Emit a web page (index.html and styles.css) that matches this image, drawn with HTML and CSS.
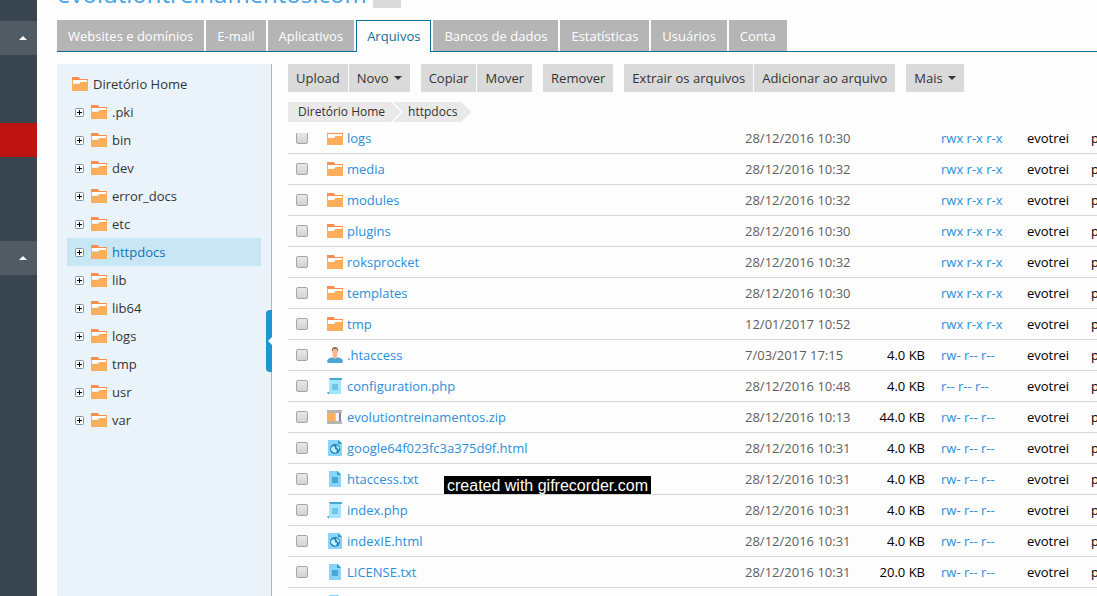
FILE: index.html
```
<!DOCTYPE html>
<html lang="pt-BR">
<head>
<meta charset="utf-8">
<title>Arquivos</title>
<link rel="stylesheet" href="styles.css">
</head>
<body>
<svg class="sprite" aria-hidden="true">
  <symbol id="folder" viewBox="0 0 16 14"><path fill="#ff8c4d" d="M0 0h7l1 2h8v3H0z"/><path fill="#fff" d="M1 3h14v3H1z"/><path fill="#fcae5b" d="M0 7h7l1.500-2H16v9H0z"/><path fill="#fcae5b" d="M0 3h1v5H0zM15 3h1v3h-1z"/></symbol>
  <symbol id="user" viewBox="0 0 16 16"><path fill="#4ba5d2" d="M0 15q0-4 5-4.500h6q5 .5 5 4.500l-1.500 1h-13z"/><path fill="#f5b893" d="M5.500 2h5v5L10 9v2l-2 1-2-1V9l-.5-2z"/><path fill="#8b684f" d="M5 3q0-3 3-3t3 3v1h-1V2H6v2H5z"/></symbol>
  <symbol id="php" viewBox="0 0 16 16"><path fill="#a5e4ff" d="M3 1h11v15H2V3z"/><path fill="#4ba5d2" d="M2 0h13v2H3zM0 14h2v2H1z"/><path fill="#71c4e6" d="M5 6h6v6H5z"/></symbol>
  <symbol id="zip" viewBox="0 0 16 14"><path fill="#f4f4fa" d="M1 2h13v10H1z"/><path fill="#fcae5b" d="M0 3h8v8H0z"/><path fill="#e4c9a6" d="M8 3h1v8H8z"/><path fill="#8581b0" d="M12 2h2v10h-2z"/><path fill="#b5b5b5" d="M0 0h15v3H0zM0 11h15v3H0z"/></symbol>
  <symbol id="html" viewBox="0 0 16 16"><path fill="#89d5fa" d="M1 0h11l3 3v13H1z"/><path fill="#3499c7" d="M11 0l4 4h-4z"/><circle cx="8" cy="9" r="5" fill="#1e84b5"/><path fill="#c5efff" d="M4 8l2-2 2 1v2l2 1-1 3-3-1-2-2zM9 5l3 2v3l-2-2z"/></symbol>
  <symbol id="txt" viewBox="0 0 16 16"><path fill="#89d5fa" d="M2 0h9l3 3v13H2z"/><path fill="#3499c7" d="M10 0l4 4h-4z"/><path fill="#4ba5d2" d="M5 6h6v6H5z"/></symbol>
  <symbol id="plus" viewBox="0 0 9 9"><rect x=".5" y=".5" width="8" height="8" rx="1" fill="#fff" stroke="#7d91b8"/><path fill="#000" d="M4 2h1v5H4zM2 4h5v1H2z"/></symbol>
</svg>
<div class="page">
  <aside class="rail">
    <button class="rail-item" aria-label="Recolher"><i class="up"></i></button>
    <div class="rail-item current"></div>
    <button class="rail-item" aria-label="Recolher"><i class="up"></i></button>
  </aside>
  <main class="content">
    <header class="title"><h1>evolutiontreinamentos.com</h1><button class="title-menu" aria-label="Domínios"></button></header>
    <nav class="tabs">
      <a href="#">Websites e domínios</a><a href="#">E-mail</a><a href="#">Aplicativos</a><a href="#" class="active">Arquivos</a><a href="#">Bancos de dados</a><a href="#">Estatísticas</a><a href="#">Usuários</a><a href="#">Conta</a>
    </nav>
    <div class="columns">
      <div class="tree">
        <a href="#" class="root"><svg class="folder"><use href="#folder"/></svg>Diretório Home</a>
        <ul>
          <li><svg class="plus"><use href="#plus"/></svg><svg class="folder"><use href="#folder"/></svg><a href="#">.pki</a></li>
          <li><svg class="plus"><use href="#plus"/></svg><svg class="folder"><use href="#folder"/></svg><a href="#">bin</a></li>
          <li><svg class="plus"><use href="#plus"/></svg><svg class="folder"><use href="#folder"/></svg><a href="#">dev</a></li>
          <li><svg class="plus"><use href="#plus"/></svg><svg class="folder"><use href="#folder"/></svg><a href="#">error_docs</a></li>
          <li><svg class="plus"><use href="#plus"/></svg><svg class="folder"><use href="#folder"/></svg><a href="#">etc</a></li>
          <li class="selected"><svg class="plus"><use href="#plus"/></svg><svg class="folder"><use href="#folder"/></svg><a href="#">httpdocs</a></li>
          <li><svg class="plus"><use href="#plus"/></svg><svg class="folder"><use href="#folder"/></svg><a href="#">lib</a></li>
          <li><svg class="plus"><use href="#plus"/></svg><svg class="folder"><use href="#folder"/></svg><a href="#">lib64</a></li>
          <li><svg class="plus"><use href="#plus"/></svg><svg class="folder"><use href="#folder"/></svg><a href="#">logs</a></li>
          <li><svg class="plus"><use href="#plus"/></svg><svg class="folder"><use href="#folder"/></svg><a href="#">tmp</a></li>
          <li><svg class="plus"><use href="#plus"/></svg><svg class="folder"><use href="#folder"/></svg><a href="#">usr</a></li>
          <li><svg class="plus"><use href="#plus"/></svg><svg class="folder"><use href="#folder"/></svg><a href="#">var</a></li>
        </ul>
        <button class="handle" aria-label="Ocultar árvore"><i></i></button>
      </div>
      <section class="files">
        <div class="toolbar">
          <div class="group"><button>Upload</button><button>Novo<i class="down"></i></button></div>
          <div class="group"><button>Copiar</button><button>Mover</button></div>
          <div class="group"><button>Remover</button></div>
          <div class="group"><button>Extrair os arquivos</button><button>Adicionar ao arquivo</button></div>
          <div class="group"><button>Mais<i class="down"></i></button></div>
        </div>
        <nav class="crumbs"><a href="#">Diretório Home</a><a href="#">httpdocs</a></nav>
        <div class="scroll">
          <table>
            <colgroup><col class="c-check"><col><col class="c-date"><col class="c-size"><col class="c-perm"><col class="c-user"><col class="c-group"></colgroup>
            <tbody>
            <tr><td><input type="checkbox" aria-label="logs"></td><td><a href="#" class="name"><svg class="folder"><use href="#folder"/></svg>logs</a></td><td>28/12/2016 10:30</td><td></td><td><a href="#">rwx r-x r-x</a></td><td>evotrei</td><td>psacln</td></tr>
            <tr><td><input type="checkbox" aria-label="media"></td><td><a href="#" class="name"><svg class="folder"><use href="#folder"/></svg>media</a></td><td>28/12/2016 10:32</td><td></td><td><a href="#">rwx r-x r-x</a></td><td>evotrei</td><td>psacln</td></tr>
            <tr><td><input type="checkbox" aria-label="modules"></td><td><a href="#" class="name"><svg class="folder"><use href="#folder"/></svg>modules</a></td><td>28/12/2016 10:32</td><td></td><td><a href="#">rwx r-x r-x</a></td><td>evotrei</td><td>psacln</td></tr>
            <tr><td><input type="checkbox" aria-label="plugins"></td><td><a href="#" class="name"><svg class="folder"><use href="#folder"/></svg>plugins</a></td><td>28/12/2016 10:30</td><td></td><td><a href="#">rwx r-x r-x</a></td><td>evotrei</td><td>psacln</td></tr>
            <tr><td><input type="checkbox" aria-label="roksprocket"></td><td><a href="#" class="name"><svg class="folder"><use href="#folder"/></svg>roksprocket</a></td><td>28/12/2016 10:32</td><td></td><td><a href="#">rwx r-x r-x</a></td><td>evotrei</td><td>psacln</td></tr>
            <tr><td><input type="checkbox" aria-label="templates"></td><td><a href="#" class="name"><svg class="folder"><use href="#folder"/></svg>templates</a></td><td>28/12/2016 10:30</td><td></td><td><a href="#">rwx r-x r-x</a></td><td>evotrei</td><td>psacln</td></tr>
            <tr><td><input type="checkbox" aria-label="tmp"></td><td><a href="#" class="name"><svg class="folder"><use href="#folder"/></svg>tmp</a></td><td>12/01/2017 10:52</td><td></td><td><a href="#">rwx r-x r-x</a></td><td>evotrei</td><td>psacln</td></tr>
            <tr><td><input type="checkbox" aria-label=".htaccess"></td><td><a href="#" class="name"><svg class="file"><use href="#user"/></svg>.htaccess</a></td><td>7/03/2017 17:15</td><td>4.0 KB</td><td><a href="#">rw- r-- r--</a></td><td>evotrei</td><td>psacln</td></tr>
            <tr><td><input type="checkbox" aria-label="configuration.php"></td><td><a href="#" class="name"><svg class="file"><use href="#php"/></svg>configuration.php</a></td><td>28/12/2016 10:48</td><td>4.0 KB</td><td><a href="#">r-- r-- r--</a></td><td>evotrei</td><td>psacln</td></tr>
            <tr><td><input type="checkbox" aria-label="evolutiontreinamentos.zip"></td><td><a href="#" class="name"><svg class="folder"><use href="#zip"/></svg>evolutiontreinamentos.zip</a></td><td>28/12/2016 10:13</td><td>44.0 KB</td><td><a href="#">rw- r-- r--</a></td><td>evotrei</td><td>psacln</td></tr>
            <tr><td><input type="checkbox" aria-label="google64f023fc3a375d9f.html"></td><td><a href="#" class="name"><svg class="file"><use href="#html"/></svg>google64f023fc3a375d9f.html</a></td><td>28/12/2016 10:31</td><td>4.0 KB</td><td><a href="#">rw- r-- r--</a></td><td>evotrei</td><td>psacln</td></tr>
            <tr><td><input type="checkbox" aria-label="htaccess.txt"></td><td><a href="#" class="name"><svg class="file"><use href="#txt"/></svg>htaccess.txt</a></td><td>28/12/2016 10:31</td><td>4.0 KB</td><td><a href="#">rw- r-- r--</a></td><td>evotrei</td><td>psacln</td></tr>
            <tr><td><input type="checkbox" aria-label="index.php"></td><td><a href="#" class="name"><svg class="file"><use href="#php"/></svg>index.php</a></td><td>28/12/2016 10:31</td><td>4.0 KB</td><td><a href="#">rw- r-- r--</a></td><td>evotrei</td><td>psacln</td></tr>
            <tr><td><input type="checkbox" aria-label="indexIE.html"></td><td><a href="#" class="name"><svg class="file"><use href="#html"/></svg>indexIE.html</a></td><td>28/12/2016 10:31</td><td>4.0 KB</td><td><a href="#">rw- r-- r--</a></td><td>evotrei</td><td>psacln</td></tr>
            <tr><td><input type="checkbox" aria-label="LICENSE.txt"></td><td><a href="#" class="name"><svg class="file"><use href="#txt"/></svg>LICENSE.txt</a></td><td>28/12/2016 10:31</td><td>20.0 KB</td><td><a href="#">rw- r-- r--</a></td><td>evotrei</td><td>psacln</td></tr>
            <tr><td></td><td><span class="name"><svg class="file"><use href="#txt"/></svg></span></td><td></td><td></td><td></td><td></td><td></td></tr>
            </tbody>
          </table>
        </div>
      </section>
    </div>
  </main>
  <div class="watermark">created with gifrecorder.com</div>
</div>
</body>
</html>
```
FILE: styles.css
```
* { box-sizing: border-box; }
body { margin: 0; background: #fdfdfd; font: 13px/18px "Open Sans", "Noto Sans", sans-serif; color: #333; }
a { color: inherit; text-decoration: none; }
button { border: 0; border-radius: 0; margin: 0; padding: 0; font: inherit; color: inherit; }
ul { list-style: none; margin: 0; padding: 0; }
svg { display: block; flex: none; }
.sprite { display: none; }
.page { position: relative; display: flex; height: 100vh; overflow: hidden; }

.rail { flex: none; width: 37px; background: #394550; padding-top: 21px; display: flex; flex-direction: column; }
.rail-item { height: 34px; background: #515b63; display: flex; align-items: center; justify-content: flex-end; padding-right: 10px; }
.rail-item.current { background: #bd1313; margin: 68px 0 84px; }
.up { border: 4px solid transparent; border-top: 0; border-bottom-color: #fff; }

.content { flex: 1; min-width: 0; padding-left: 20px; display: flex; flex-direction: column; }
.title { flex: none; height: 20px; display: flex; align-items: flex-end; gap: 6px; padding-bottom: 12px; }
.title h1 { margin: 0; font-size: 24px; line-height: 28px; font-weight: 400; color: #43a3e9; }
.title-menu { width: 28px; height: 28px; background: #dadada; }

.tabs { flex: none; display: flex; gap: 2px; height: 32px; border-bottom: 1px solid #0f6f94; }
.tabs a { background: #b5b5b5; color: #fff; padding: 7px 11px 0; white-space: nowrap; }
.tabs .active { background: #fdfdfd; color: #0f6f94; border: 1px solid #0f6f94; border-bottom: 0; padding: 6px 10px 0; margin-bottom: -1px; }

.columns { flex: 1; min-height: 0; display: flex; gap: 16px; padding-top: 12px; }
.tree { position: relative; flex: none; width: 215px; padding: 6px 10px; background: #eaf3fa; border-right: 1px solid #b2b4b8; }
.root, .tree li { display: flex; align-items: center; gap: 5px; height: 28px; }
.root { padding-left: 5px; }
.tree li { padding-left: 8px; }
.tree .selected { background: #c8e6f4; color: #0f75b5; }
.plus { width: 9px; height: 9px; margin-right: 2px; }
.folder { width: 16px; height: 14px; }
.file { width: 16px; height: 16px; }
.handle { position: absolute; right: -1px; top: 246px; width: 6px; height: 62px; background: #1f96cc; border-radius: 4px 0 0 4px; display: flex; align-items: center; justify-content: flex-end; }
.handle i { border: 4px solid transparent; border-left: 0; border-right-color: #fff; }

.files { flex: 1; min-width: 0; display: flex; flex-direction: column; }
.toolbar { flex: none; display: flex; gap: 11px; }
.group { display: flex; gap: 1px; }
.group button { height: 28px; padding: 0 8px; background: #dadada; white-space: nowrap; display: flex; align-items: center; gap: 5px; }
.down { border: 4px solid transparent; border-bottom: 0; border-top-color: #333; }
.crumbs { flex: none; display: flex; margin: 10px 0 11px; font-size: 12px; line-height: 20px; }
.crumbs a { height: 20px; padding: 0 16px 0 10px; background: #e9e9e9; clip-path: polygon(0 0, calc(100% - 10px) 0, 100% 50%, calc(100% - 10px) 100%, 0 100%); }
.crumbs a + a { margin-left: -8px; padding: 0 14px 0 15px; clip-path: polygon(0 0, calc(100% - 10px) 0, 100% 50%, calc(100% - 10px) 100%, 0 100%, 10px 50%); }

.scroll { flex: 1; min-height: 0; overflow: hidden; }
table { table-layout: fixed; width: 100%; margin-top: -10px; border-collapse: separate; border-spacing: 0; }
.c-check { width: 39px; }
.c-date { width: 122px; }
.c-size { width: 58px; }
.c-perm { width: 102px; }
.c-user { width: 64px; }
.c-group { width: 6px; }
td { height: 31px; padding: 0; border-bottom: 1px solid #d6d6d6; white-space: nowrap; vertical-align: middle; color: #000; }
td:first-child { padding-left: 8px; }
td:nth-child(3) { color: #5f5f5f; }
td:nth-child(4) { text-align: right; }
td:nth-child(5) { padding-left: 16px; }
td a { color: #2b8fdb; }
.name { display: flex; align-items: center; gap: 4px; }
input { appearance: none; display: block; width: 12px; height: 12px; margin: 0; border: 1px solid #a6a6a6; border-radius: 2px; background: linear-gradient(#e8e8e8, #d2d2d2); }
.watermark { position: absolute; left: 444px; top: 476px; padding: 1px 3px 0; background: #000; color: #fff; font: 16px/17px "Liberation Sans", Arial, sans-serif; }
```
